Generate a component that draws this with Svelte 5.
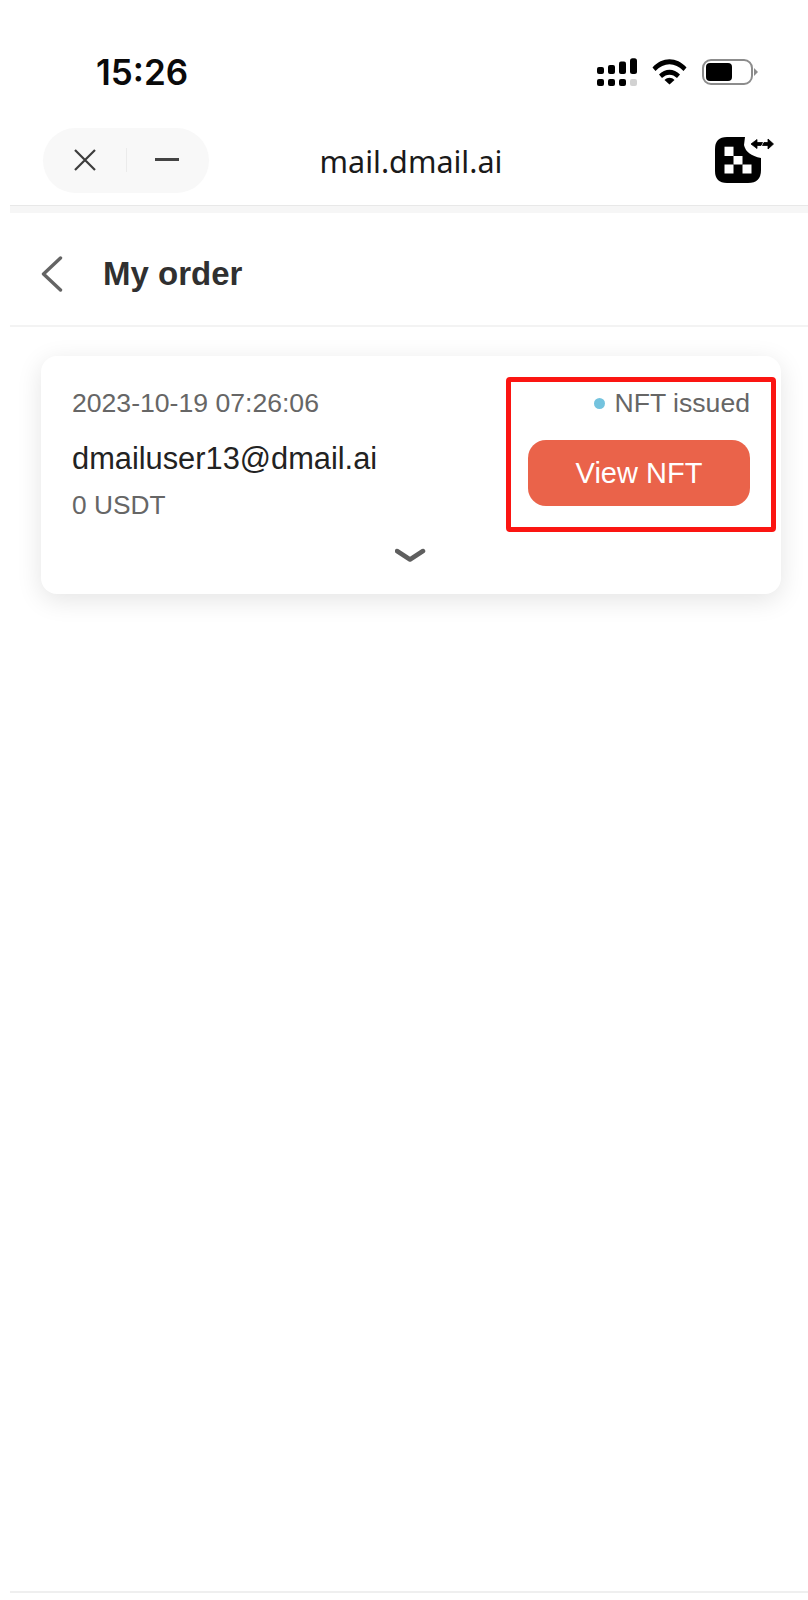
<script>
  const order = {
    date: '2023-10-19 07:26:06',
    email: 'dmailuser13@dmail.ai',
    amount: '0 USDT',
    status: 'NFT issued',
    action: 'View NFT'
  };
</script>

<div class="page">
  <div class="status">
    <span class="time">15:26</span>
    <div class="status-icons">
      <svg class="signal" width="41" height="29" viewBox="0 0 41 29" aria-hidden="true">
        <g fill="#000">
          <rect x="0" y="9" width="7" height="7" rx="2"/>
          <rect x="11" y="7" width="7" height="9" rx="2"/>
          <rect x="22" y="3.500" width="7" height="12.500" rx="2"/>
          <rect x="33" y="0.300" width="7" height="15.700" rx="2.500"/>
          <rect x="0" y="21" width="7" height="7" rx="2"/>
          <rect x="11" y="21" width="7" height="7" rx="2"/>
          <rect x="22" y="21" width="7" height="7" rx="2"/>
        </g>
        <rect x="33" y="21" width="7" height="7" rx="2" fill="#d2d2d2"/>
      </svg>
      <svg class="wifi" width="35" height="26" viewBox="0 0 35 26" aria-hidden="true">
        <g fill="#000">
          <path d="M0.500 8.500C10 -2.500 25 -2.500 34.500 8.500L31.500 12C23 3 12 3 3.500 12Z"/>
          <path d="M7 15.500C13 9 22 9 28 15.500L25 19C20.500 14.500 14.500 14.500 10 19Z"/>
          <path d="M12.500 21C15.500 18 19.500 18 22.500 21L17.500 25.500Z"/>
        </g>
      </svg>
      <div class="battery">
        <div class="battery-shell"><div class="battery-level"></div></div>
        <div class="battery-cap"></div>
      </div>
    </div>
  </div>

  <div class="mini-bar">
    <div class="pill">
      <svg width="24" height="24" viewBox="0 0 24 24" aria-hidden="true">
        <path d="M2 2L22 22M22 2L2 22" stroke="#3c3c3c" stroke-width="2.200" fill="none"/>
      </svg>
      <span class="pill-sep"></span>
      <span class="pill-dash"></span>
    </div>
    <span class="host">mail.dmail.ai</span>
    <svg class="logo" width="60" height="50" viewBox="0 0 60 50" aria-hidden="true">
      <path d="M12 0H30L29 8Q31 18 46 21V33Q46 46 33 46H12Q0 46 0 34V12Q0 0 12 0Z" fill="#000"/>
      <g fill="#fff">
        <rect x="9.500" y="9.700" width="9" height="9.300"/>
        <rect x="18.500" y="19" width="9" height="8.500"/>
        <rect x="9.500" y="27.500" width="9" height="9"/>
        <rect x="27.500" y="27.500" width="9" height="9"/>
      </g>
      <g fill="#000" stroke="#000" stroke-width="0.800">
        <path d="M36 7L42 2.500V5.500H47.500L46 8.500H42V11.500Z"/>
        <path d="M58.500 7L53 2V5.500H49L47.500 8.500H53V12Z"/>
      </g>
    </svg>
  </div>
  <div class="bar-rule"></div>

  <header class="title-bar">
    <svg width="22" height="36" viewBox="0 0 22 36" aria-hidden="true">
      <path d="M19.500 2L2.500 18L19.500 34" fill="none" stroke="#646464" stroke-width="3.400" stroke-linecap="round" stroke-linejoin="round"/>
    </svg>
    <h1>My order</h1>
  </header>

  <main class="content">
    <article class="card">
      <div class="row">
        <div class="info">
          <div class="date">{order.date}</div>
          <div class="email">{order.email}</div>
          <div class="amount">{order.amount}</div>
        </div>
        <div class="side">
          <div class="state"><span class="dot"></span>{order.status}</div>
          <button class="view">{order.action}</button>
        </div>
      </div>
      <div class="expand">
        <svg width="32" height="15" viewBox="0 0 32 15" aria-hidden="true">
          <path d="M2 3L15 11.500L28 3" fill="none" stroke="#5f5f5f" stroke-width="4.500" stroke-linecap="round" stroke-linejoin="round"/>
        </svg>
      </div>
      <div class="highlight"></div>
    </article>
  </main>

  <div class="bottom-rule"></div>
</div>

<style>
  :global(body) {
    margin: 0;
    background: #fff;
  }

  .page {
    width: 808px;
    height: 1600px;
    display: flex;
    flex-direction: column;
    background: #fff;
    font-family: "Liberation Sans", Arial, sans-serif;
    overflow: hidden;
  }

  .status {
    height: 128px;
    box-sizing: border-box;
    padding: 52px 50px 0 96px;
    display: flex;
    justify-content: space-between;
    align-items: flex-start;
  }

  .time {
    font-family: Inter, sans-serif;
    font-size: 35px;
    font-weight: 600;
    line-height: 41px;
    color: #0a0a0a;
  }

  .status-icons {
    display: flex;
    align-items: flex-start;
    padding-top: 6px;
  }

  .signal {
    margin-right: 14px;
  }

  .wifi {
    margin-top: 1px;
    margin-right: 15px;
  }

  .battery {
    display: flex;
    align-items: center;
    margin-top: 1px;
  }

  .battery-shell {
    width: 51px;
    height: 26px;
    box-sizing: border-box;
    border: 2px solid #8c8c8c;
    border-radius: 9px;
    padding: 2px;
    background: #fff;
  }

  .battery-level {
    width: 26px;
    height: 18px;
    border-radius: 4px;
    background: #000;
  }

  .battery-cap {
    width: 0;
    height: 0;
    margin-left: 1px;
    border-left: 4px solid #8c8c8c;
    border-top: 4px solid transparent;
    border-bottom: 4px solid transparent;
  }

  .mini-bar {
    height: 77px;
    box-sizing: border-box;
    padding: 0 33px 12px 43px;
    display: flex;
    align-items: flex-start;
  }

  .pill {
    width: 166px;
    height: 65px;
    border-radius: 33px;
    background: #f8f8f8;
    display: flex;
    align-items: center;
    box-sizing: border-box;
    padding: 0 0 2px 30px;
  }

  .pill-sep {
    width: 1px;
    height: 24px;
    margin-left: 29px;
    background: #ebebeb;
  }

  .pill-dash {
    width: 24px;
    height: 2.500px;
    margin-left: 28px;
    background: #444;
  }

  .host {
    flex: 1;
    text-align: center;
    font-family: "Noto Sans", sans-serif;
    font-size: 30.500px;
    line-height: 66px;
    color: #1a1a1a;
    margin-right: 102px;
  }

  .logo {
    margin-top: 9px;
  }

  .bar-rule {
    height: 7px;
    margin-left: 10px;
    border-top: 1px solid #e8e8e8;
    background: #f6f6f6;
    flex: none;
  }

  .title-bar {
    height: 114px;
    margin-left: 10px;
    box-sizing: border-box;
    padding: 10px 0 0 31px;
    border-bottom: 2px solid #f3f3f3;
    display: flex;
    align-items: center;
    flex: none;
  }

  h1 {
    margin: 0 0 0 40px;
    font-size: 33px;
    font-weight: 700;
    line-height: 36px;
    color: #303030;
  }

  .content {
    flex: 1;
    padding: 29px 27px 0 41px;
  }

  .card {
    position: relative;
    height: 238px;
    box-sizing: border-box;
    padding: 31px 31px 0 31px;
    border-radius: 16px;
    background: #fff;
    box-shadow: 0 6px 26px rgba(0, 0, 0, 0.11);
  }

  .row {
    display: flex;
    justify-content: space-between;
  }

  .date,
  .amount,
  .state {
    font-size: 26.600px;
    line-height: 32px;
    color: #666;
  }

  .email {
    margin-top: 23px;
    font-size: 30.800px;
    line-height: 34px;
    color: #222;
  }

  .amount {
    margin-top: 13px;
    font-size: 26.300px;
  }

  .side {
    display: flex;
    flex-direction: column;
    align-items: flex-end;
  }

  .state {
    display: flex;
    align-items: center;
  }

  .dot {
    width: 11px;
    height: 11px;
    margin-right: 10px;
    border-radius: 50%;
    background: #74c3de;
  }

  .view {
    width: 222px;
    height: 66px;
    margin-top: 21px;
    border: none;
    border-radius: 18px;
    background: #ea634a;
    color: #fff;
    font: 29px/34px "Liberation Sans", Arial, sans-serif;
  }

  .expand {
    display: flex;
    justify-content: center;
    margin-top: 27px;
  }

  .highlight {
    position: absolute;
    left: 465px;
    top: 21px;
    width: 270px;
    height: 155px;
    box-sizing: border-box;
    border: 5px solid #fb1512;
    border-radius: 4px;
    pointer-events: none;
  }

  .bottom-rule {
    height: 2px;
    margin: 0 0 7px 10px;
    background: #efefef;
    flex: none;
  }
</style>
